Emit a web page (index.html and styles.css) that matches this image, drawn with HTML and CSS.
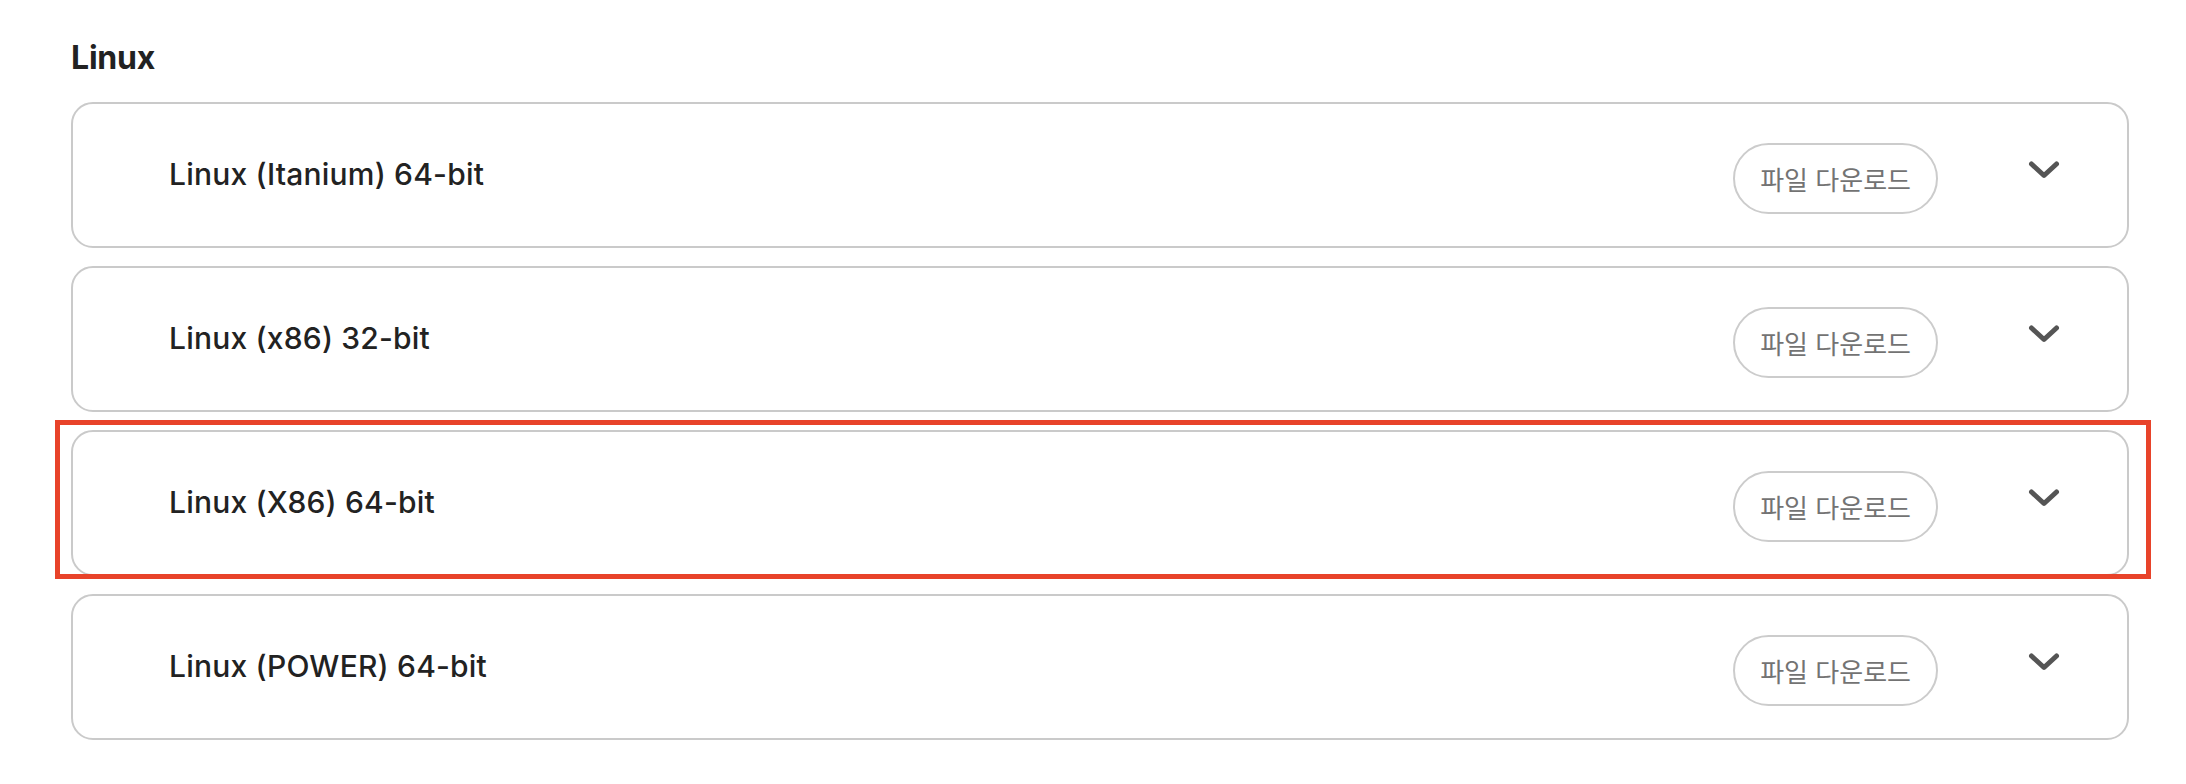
FILE: index.html
```html
<!DOCTYPE html>
<html lang="ko">
<head>
<meta charset="utf-8">
<title>Linux</title>
<link rel="stylesheet" href="styles.css">
</head>
<body>
<section class="section">
  <h2 class="section-title">Linux</h2>
  <ul class="list">
    <li class="item">
      <div class="card">
        <span class="name">Linux (Itanium) 64-bit</span>
        <button class="download">파일 다운로드</button>
        <svg class="chevron" viewBox="0 0 32 20" width="32" height="20"><polyline points="3.5,4 16,15.5 28.5,4"/></svg>
      </div>
    </li>
    <li class="item">
      <div class="card">
        <span class="name">Linux (x86) 32-bit</span>
        <button class="download">파일 다운로드</button>
        <svg class="chevron" viewBox="0 0 32 20" width="32" height="20"><polyline points="3.5,4 16,15.5 28.5,4"/></svg>
      </div>
    </li>
    <li class="item highlighted">
      <div class="card">
        <span class="name">Linux (X86) 64-bit</span>
        <button class="download">파일 다운로드</button>
        <svg class="chevron" viewBox="0 0 32 20" width="32" height="20"><polyline points="3.5,4 16,15.5 28.5,4"/></svg>
      </div>
      <div class="highlight-box"></div>
    </li>
    <li class="item">
      <div class="card">
        <span class="name">Linux (POWER) 64-bit</span>
        <button class="download">파일 다운로드</button>
        <svg class="chevron" viewBox="0 0 32 20" width="32" height="20"><polyline points="3.5,4 16,15.5 28.5,4"/></svg>
      </div>
    </li>
  </ul>
</section>
</body>
</html>
```
FILE: styles.css
```css
* { box-sizing: border-box; }
html, body {
  margin: 0;
  padding: 0;
  background: #ffffff;
}
body {
  font-family: Inter, "Noto Sans CJK KR", sans-serif;
  color: #222222;
  width: 2186px;
  height: 784px;
  overflow: hidden;
}
.section {
  padding: 39px 57px 0 71px;
}
.section-title {
  margin: 0 0 25px 0;
  font-size: 32px;
  line-height: 38px;
  font-weight: 700;
  color: #222222;
  letter-spacing: -0.2px;
}
.list {
  list-style: none;
  margin: 0;
  padding: 0;
  display: flex;
  flex-direction: column;
  gap: 18px;
}
.item {
  position: relative;
}
.card {
  height: 146px;
  border: 2px solid #cacaca;
  border-radius: 22px;
  display: flex;
  align-items: center;
  padding: 0 67px 0 96px;
  background: #ffffff;
}
.name {
  flex: 1;
  font-size: 30px;
  line-height: 36px;
  font-weight: 500;
  letter-spacing: 0.2px;
  color: #222222;
  margin-bottom: 2px;
}
.download {
  height: 71px;
  padding: 0 25px;
  border: 2px solid #cccccc;
  border-radius: 36px;
  background: #ffffff;
  font-family: "Noto Sans CJK KR", sans-serif;
  font-size: 26px;
  font-weight: 400;
  color: #737373;
  margin-top: 7px;
  cursor: pointer;
}
.chevron {
  margin-left: 90px;
  margin-bottom: 10px;
  fill: none;
  stroke: #555555;
  stroke-width: 5;
  stroke-linecap: round;
  stroke-linejoin: round;
}
.highlight-box {
  position: absolute;
  left: -16px;
  top: -10px;
  width: 2096px;
  height: 159px;
  border: 5px solid #e8432a;
  pointer-events: none;
}
```
